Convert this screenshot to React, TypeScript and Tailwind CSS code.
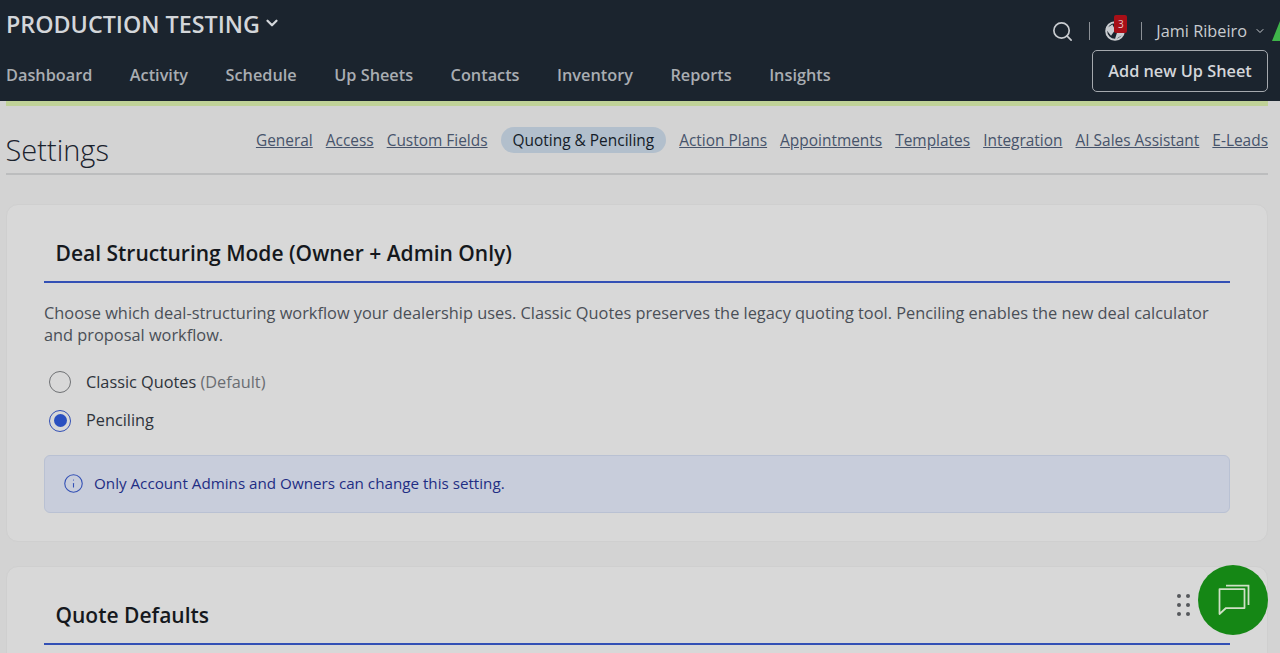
import { ChevronDown, Search, Info } from 'lucide-react'

const NAV = ['Dashboard', 'Activity', 'Schedule', 'Up Sheets', 'Contacts', 'Inventory', 'Reports', 'Insights']

const TABS = [
  'General',
  'Access',
  'Custom Fields',
  'Quoting & Penciling',
  'Action Plans',
  'Appointments',
  'Templates',
  'Integration',
  'AI Sales Assistant',
  'E-Leads',
]

function Header() {
  return (
    <header className="h-[101px] bg-[#1b242e] pl-[6px] flex justify-between overflow-hidden">
      <div className="flex flex-col">
        <div className="h-[50px] flex items-center gap-[3px] pb-[2px] text-[23.3px] font-semibold text-[#d3d6da]">
          PRODUCTION TESTING
          <ChevronDown size={18} strokeWidth={3} className="mb-[3px]" />
        </div>
        <nav className="flex gap-[37.5px] mt-[13px] text-[16.3px] font-semibold text-[#a9adb2]">
          {NAV.map(n => (
            <span key={n}>{n}</span>
          ))}
        </nav>
      </div>
      <div className="flex flex-col items-end">
        <div className="h-[50px] flex items-center pt-[12px] text-[#c9ccd0]">
          <Search size={23} strokeWidth={1.75} />
          <div className="w-px h-[18px] bg-[#8b9096] ml-[15px] mr-[15px]" />
          <div className="relative w-[20px] h-[20px]">
            <svg viewBox="0 0 20 20" className="w-[20px] h-[20px]" fill="none" stroke="currentColor" strokeWidth="2">
              <circle cx="10" cy="10" r="8.8" />
              <path d="M2 8l5-3 2 4-3 4zM11 18l2-6 6 1" fill="currentColor" />
            </svg>
            <span className="absolute -top-[6px] left-[9px] w-[13px] h-[18px] rounded-[2px] bg-[#a80f17] text-[10px] leading-[18px] text-center text-[#e8c9c9]">
              3
            </span>
          </div>
          <div className="w-px h-[18px] bg-[#8b9096] ml-[16px] mr-[14px]" />
          <span className="text-[16.3px]">Jami Ribeiro</span>
          <ChevronDown size={12} className="ml-[7px] mr-[6px]" />
          <svg viewBox="0 0 8 20" className="w-[8px] h-[20px]">
            <path d="M0 20 L8 0 V20Z" fill="#3fb54a" />
          </svg>
        </div>
        <button className="mr-[12px] w-[176px] h-[42px] rounded-[5px] border border-[#a5a9ae] text-[16.3px] font-semibold text-[#d3d6da]">
          Add new Up Sheet
        </button>
      </div>
    </header>
  )
}

function Tabs() {
  return (
    <div className="flex items-center gap-[13px]">
      {TABS.map(t =>
        t === 'Quoting & Penciling' ? (
          <span key={t} className="h-[26px] mb-[2px] px-[12px] rounded-full bg-[#b2bfcc] text-[#141c28] leading-[26px]">
            {t}
          </span>
        ) : (
          <span key={t} className="underline text-[#47546b]">
            {t}
          </span>
        ),
      )}
    </div>
  )
}

function SectionTitle({ children }: { children: string }) {
  return (
    <h2 className="h-[56px] pl-[11.5px] border-b-2 border-[#3350b5] text-[21px] font-semibold leading-[52px] text-[#15181d]">
      {children}
    </h2>
  )
}

export default function App() {
  return (
    <div className="relative h-[653px] overflow-hidden bg-[#d3d3d3] font-['Open_Sans',sans-serif]">
      <Header />
      <div className="h-[5px] mr-[12px] ml-[6px] bg-[#c0d298]" />
      <main className="px-[6px] mr-[6px]">
        <div className="h-[69px] flex items-center justify-between border-b-2 border-[#bcbdbe] text-[15.45px]">
          <h1 className="text-[29px] font-light text-[#1a222d] mt-[20px] -ml-[0.5px]">Settings</h1>
          <div className="mt-[2px]">
            <Tabs />
          </div>
        </div>

        <section className="mt-[29px] h-[338px] rounded-[12px] border border-[#cfcfcf] bg-[#d8d8d8] px-[37px] pt-[22px]">
          <SectionTitle>Deal Structuring Mode (Owner + Admin Only)</SectionTitle>
          <p className="mt-[19px] text-[16.35px] leading-[22px] text-[#4a4f57]">
            Choose which deal-structuring workflow your dealership uses. Classic Quotes preserves the legacy quoting tool. Penciling enables the new deal calculator and proposal workflow.
          </p>
          <div className="mt-[25px] flex flex-col gap-[16.5px] pl-[5px] text-[16.3px] text-[#2e333b]">
            <label className="h-[22px] flex items-center gap-[15px]">
              <span className="w-[22px] h-[22px] rounded-full border-[1.5px] border-[#6f7174]" />
              <span>
                Classic Quotes <span className="text-[#6a6d72]">(Default)</span>
              </span>
            </label>
            <label className="h-[22px] flex items-center gap-[15px]">
              <span className="w-[22px] h-[22px] rounded-full border-[1.5px] border-[#3350b5] flex items-center justify-center">
                <span className="w-[13px] h-[13px] rounded-full bg-[#2a50c0]" />
              </span>
              <span>Penciling</span>
            </label>
          </div>
          <div className="mt-[23px] h-[58px] flex items-center gap-[10px] rounded-[6px] border border-[#b9c1d3] bg-[#c8cddb] pl-[18px] text-[15.2px] text-[#1f2d84]">
            <Info size={21} strokeWidth={1.25} className="text-[#3350b5]" />
            Only Account Admins and Owners can change this setting.
          </div>
        </section>

        <section className="mt-[24px] h-[200px] rounded-[12px] border border-[#cfcfcf] bg-[#d8d8d8] px-[37px] pt-[22px]">
          <SectionTitle>Quote Defaults</SectionTitle>
        </section>
      </main>

      <div className="absolute left-[1177px] top-[594px] grid grid-cols-2 gap-x-[5px] gap-y-[5px]">
        {[0, 1, 2, 3, 4, 5].map(i => (
          <span key={i} className="w-[4px] h-[4px] rounded-full bg-[#55585c]" />
        ))}
      </div>
      <div className="absolute left-[1198px] top-[565px] w-[70px] h-[70px] rounded-full bg-[#158715] flex items-center justify-center">
        <svg viewBox="0 0 34 34" className="w-[34px] h-[34px]" fill="none" stroke="#cfe0c6" strokeWidth="1.75">
          <path d="M3.500 6h25v19H10l-6.500 6z" strokeLinejoin="round" />
          <path d="M10 2.500h22.500V22" />
        </svg>
      </div>
    </div>
  )
}
